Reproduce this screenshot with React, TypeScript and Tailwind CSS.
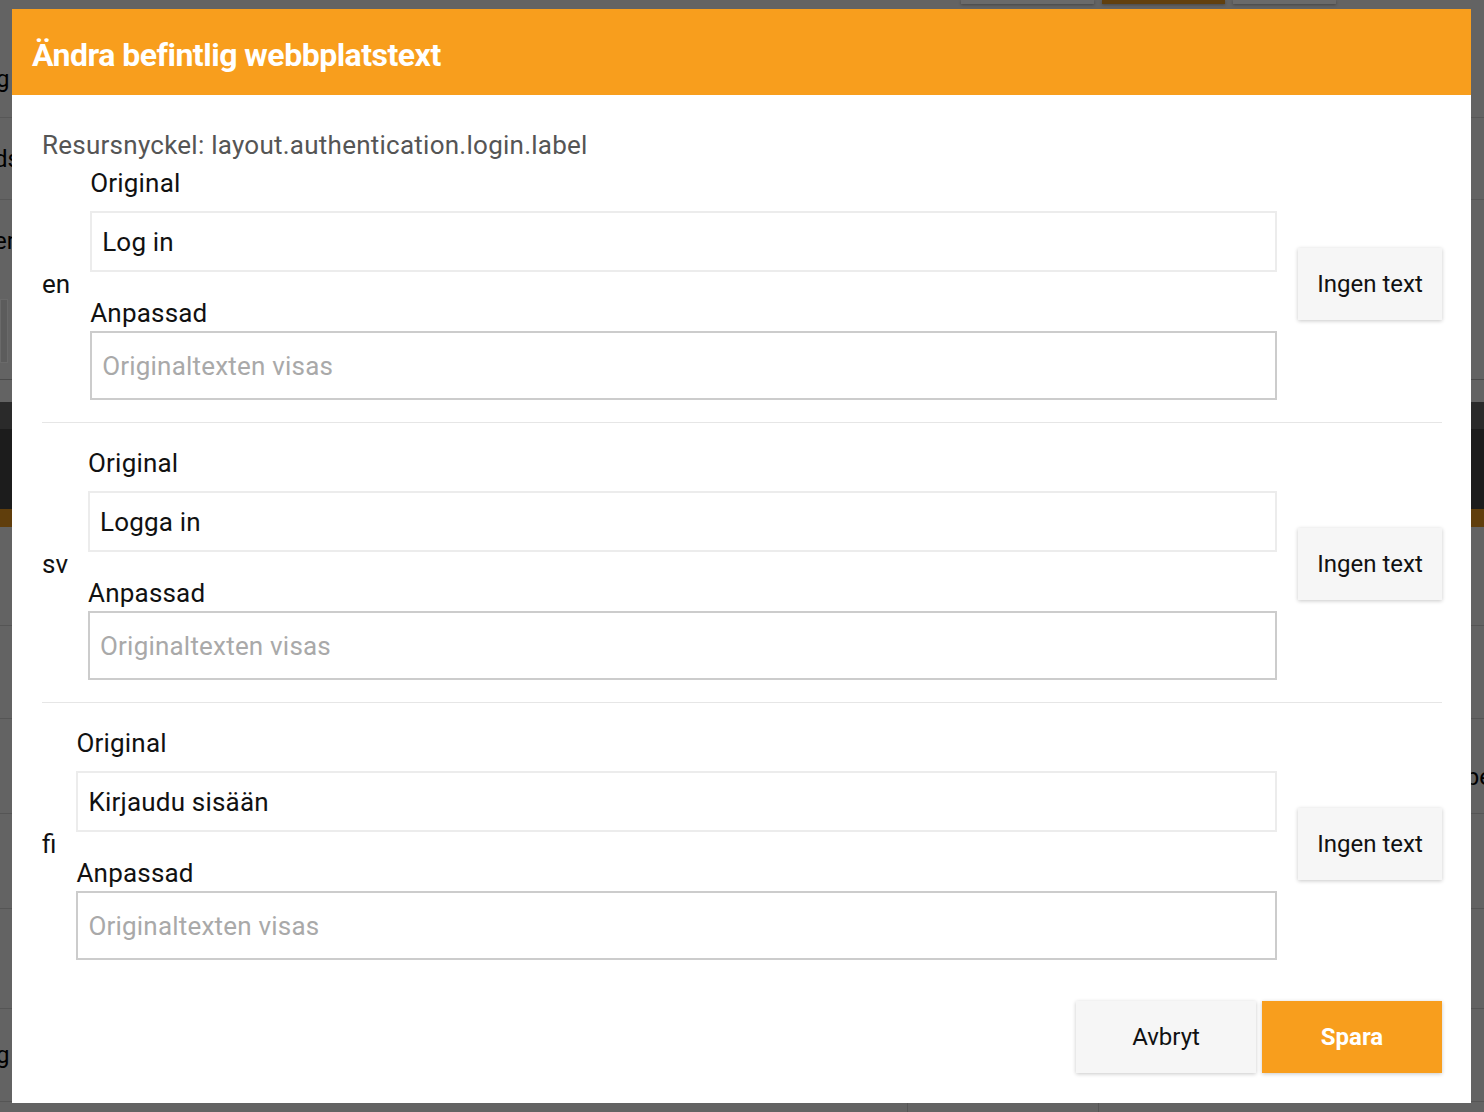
import React from "react";

const font = { fontFamily: "Roboto, 'Liberation Sans', sans-serif" };

function LangRow({ lang, original, first }: { lang: string; original: string; first?: boolean }) {
  return (
    <div className={`flex items-center ${first ? "pt-[6px]" : "pt-[24px]"} pb-[22px] ${lang !== "fi" ? "border-b border-[#e6e6e6]" : ""}`}>
      <div className="text-[26px] leading-[32px] text-[#111] mr-[20px]">{lang}</div>
      <div className="flex-1 flex flex-col">
        <div className="text-[26px] leading-[32px] text-[#111] mb-[12px] tracking-[0.2px]">Original</div>
        <div className="h-[61px] border-2 border-[#ececec] bg-white flex items-center px-[10px] pt-[2px] text-[26px] text-[#111] tracking-[0.2px]">
          {original}
        </div>
        <div className="text-[26px] leading-[32px] text-[#111] mt-[25px] mb-[2px] tracking-[0.2px]">Anpassad</div>
        <div className="h-[69px] border-2 border-[#cccccc] bg-white flex items-center px-[10px] pt-[2px] text-[26px] text-[#a9a9a9] tracking-[0.2px]">
          Originaltexten visas
        </div>
      </div>
      <button className="ml-[21px] w-[144px] h-[72px] bg-[#f6f6f6] shadow-[0_1px_4px_rgba(0,0,0,0.22)] text-[24px] text-[#111]">
        Ingen text
      </button>
    </div>
  );
}

export default function App() {
  return (
    <div className="relative w-[1484px] h-[1112px] overflow-hidden bg-[#636363]" style={font}>
      {/* background page (seen through overlay) */}
      <div className="flex flex-col w-full h-full">
        <div className="h-[40px] flex justify-end gap-[8px] pr-[148px]">
          <div className="w-[133px] h-[4px] bg-[#6a6a6a] shadow-[0_1px_3px_rgba(0,0,0,0.3)]" />
          <div className="w-[123px] h-[4px] bg-[#61400f] shadow-[0_1px_3px_rgba(0,0,0,0.3)]" />
          <div className="w-[103px] h-[4px] bg-[#6a6a6a] shadow-[0_1px_3px_rgba(0,0,0,0.3)]" />
        </div>
        <div className="h-[78px] border-b border-[#575757] flex items-center text-[24px] text-black"><span className="-ml-[4px]">g</span></div>
        <div className="h-[82px] border-b border-[#575757] flex items-center text-[24px] text-black"><span className="-ml-[6px]">ds</span></div>
        <div className="h-[82px] flex items-center text-[24px] text-black"><span className="-ml-[6px]">er</span></div>
        <div className="h-[98px] border-b border-[#4a4a4a] flex items-center">
          <div className="w-[8px] h-[64px] border border-[#6a6a6a] bg-[#5c5c5c]" />
        </div>
        <div className="h-[22px]" />
        <div className="h-[27px] bg-[#2a2a2a]" />
        <div className="h-[80px] bg-[#1c1c1c]" />
        <div className="h-[18px] bg-[#603e0c]" />
        <div className="h-[99px] border-b border-[#555]" />
        <div className="h-[93px] border-b border-[#555]" />
        <div className="h-[95px] border-b border-[#555] flex items-end justify-end text-[24px] text-black"><span className="-mr-[8px] mb-[18px]">be</span></div>
        <div className="h-[95px] border-b border-[#555]" />
        <div className="h-[100px] border-b border-[#555]" />
        <div className="h-[93px] border-b border-[#555] flex items-center text-[24px] text-black"><span className="-ml-[4px]">g</span></div>
        <div className="flex-1 flex">
          <div className="w-[908px] border-r border-[#555]" />
          <div className="w-[191px] border-r border-[#555]" />
        </div>
      </div>

      {/* modal */}
      <div className="absolute left-[12px] top-[9px] w-[1459px] h-[1094px] bg-white flex flex-col">
        <div className="h-[86px] bg-[#f89e1d] flex items-center px-[20px] pt-[6px]">
          <h1 className="text-white font-bold text-[32px] tracking-[-0.5px]">Ändra befintlig webbplatstext</h1>
        </div>
        <div className="flex-1 flex flex-col pl-[30px] pr-[29px] pt-[34px]">
          <div className="text-[26px] leading-[32px] text-[#555] tracking-[0.25px]">Resursnyckel: layout.authentication.login.label</div>
          <LangRow lang="en" original="Log in" first />
          <LangRow lang="sv" original="Logga in" />
          <LangRow lang="fi" original="Kirjaudu sisään" />
          <div className="flex justify-end gap-[6px] mt-[19px]">
            <button className="w-[180px] h-[72px] bg-[#f6f6f6] shadow-[0_1px_4px_rgba(0,0,0,0.22)] text-[24px] text-[#111]">Avbryt</button>
            <button className="w-[180px] h-[72px] bg-[#f89e1d] shadow-[0_1px_4px_rgba(0,0,0,0.22)] text-[24px] font-bold text-white">Spara</button>
          </div>
        </div>
      </div>
    </div>
  );
}
